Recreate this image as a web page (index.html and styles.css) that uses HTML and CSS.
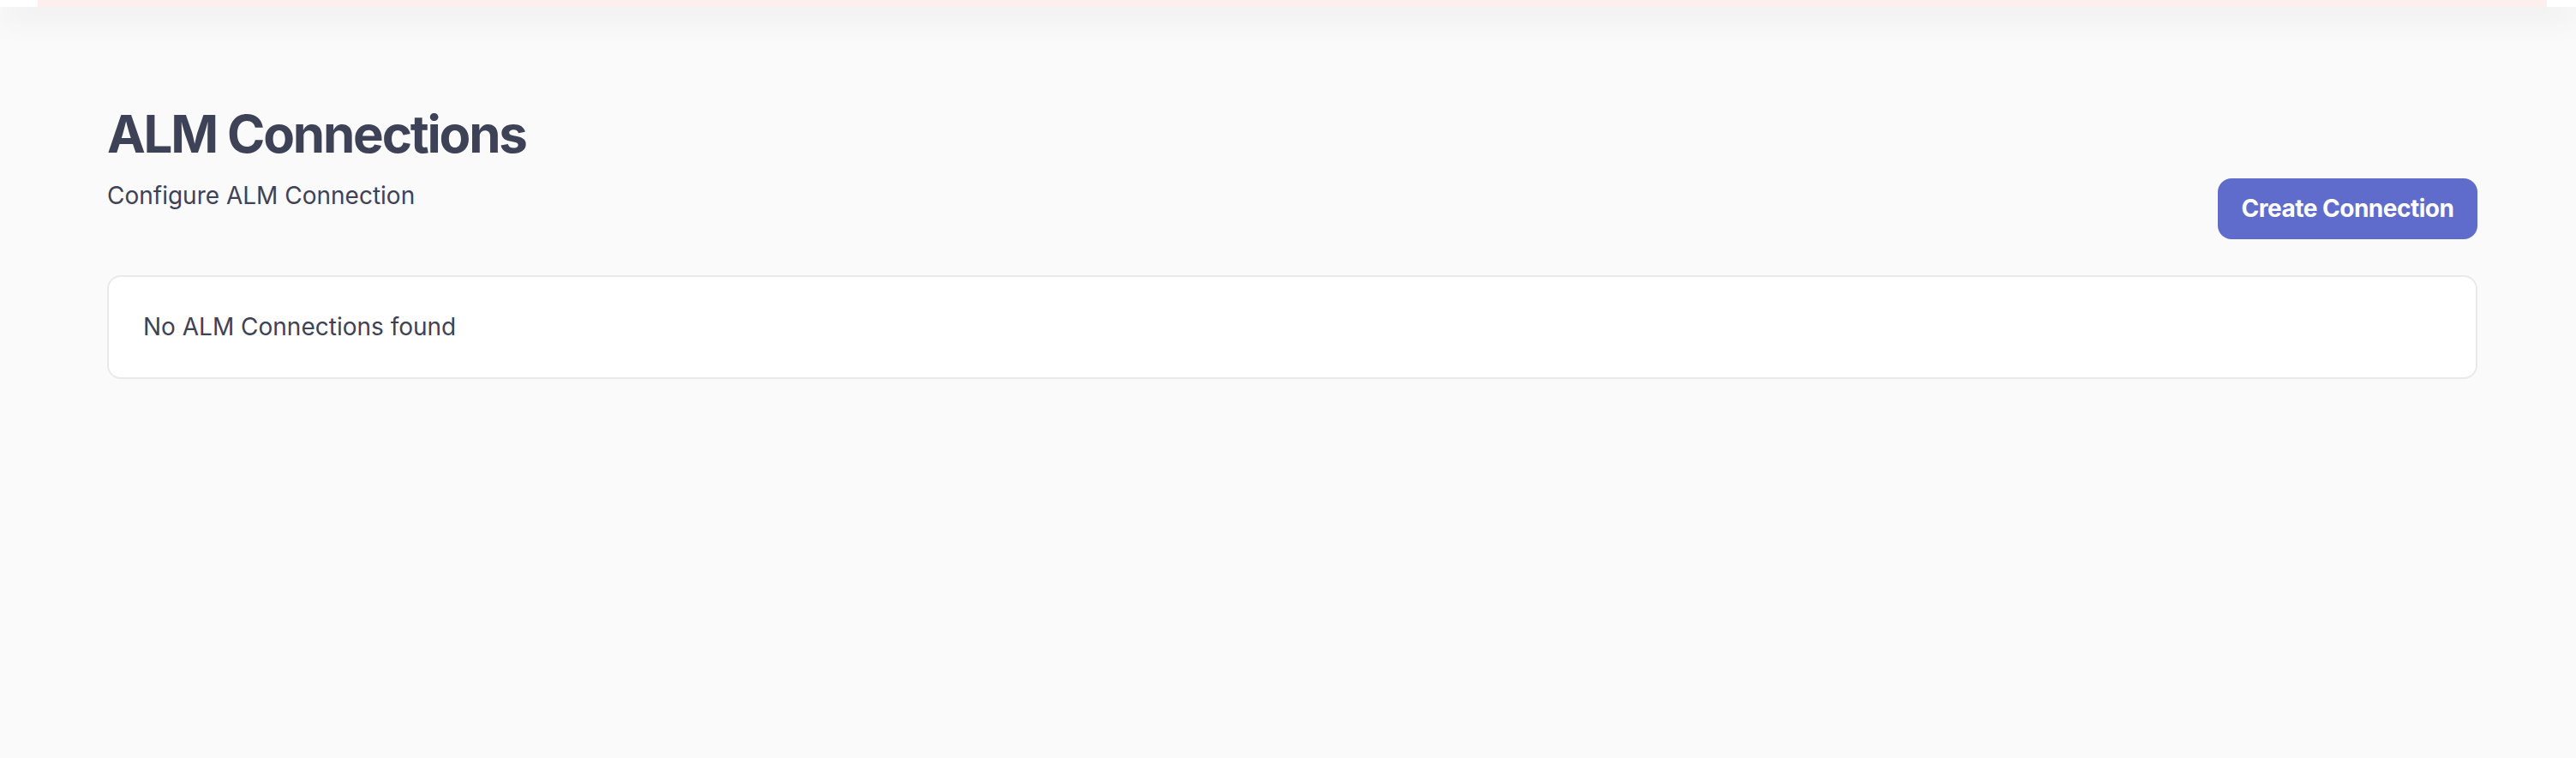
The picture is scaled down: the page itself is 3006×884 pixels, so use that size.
FILE: index.html
```html
<!DOCTYPE html>
<html lang="en">
<head>
<meta charset="utf-8">
<title>ALM Connections</title>
<link rel="stylesheet" href="styles.css">
</head>
<body>
<header class="topbar"><div class="topbar-inner"></div></header>
<main class="page">
  <h1 class="page-title">ALM Connections</h1>
  <div class="page-row">
    <p class="page-subtitle">Configure ALM Connection</p>
    <button class="btn-primary" type="button">Create Connection</button>
  </div>
  <section class="card">
    <p class="card-empty">No ALM Connections found</p>
  </section>
</main>
</body>
</html>
```
FILE: styles.css
```css
* { box-sizing: border-box; }
html, body { margin: 0; padding: 0; }
body {
  background: #fafafa;
  font-family: Inter, "Noto Sans", "Liberation Sans", sans-serif;
  color: #3f4256;
  min-height: 884px;
}
.topbar {
  height: 8px;
  background: #ffffff;
  box-shadow: 0 8px 36px rgba(30, 30, 50, 0.16);
  position: relative;
  z-index: 1;
}
.topbar-inner {
  height: 8px;
  margin: 0 34px 0 44px;
  background: #fcefee;
}
.page {
  padding: 112px 115px 0 125px;
}
.page-title {
  margin: 0;
  font-size: 60px;
  line-height: 72px;
  font-weight: 700;
  letter-spacing: -2.2px;
  color: #3e4256;
}
.page-row {
  margin-top: 16px;
  display: flex;
  justify-content: space-between;
  align-items: flex-start;
}
.page-subtitle {
  margin: 0;
  font-size: 28px;
  line-height: 40px;
  color: #3f4256;
}
.btn-primary {
  background: #606ccb;
  color: #ffffff;
  border: 0;
  border-radius: 16px;
  font-family: inherit;
  font-size: 28px;
  line-height: 40px;
  font-weight: 700;
  letter-spacing: -0.5px;
  white-space: nowrap;
  padding: 15px 0 16px;
  width: 303px;
  text-align: center;
}
.card {
  margin-top: 42px;
  background: #ffffff;
  border: 2px solid #e9e9eb;
  border-radius: 16px;
  padding: 38px 40px 39px;
}
.card-empty {
  margin: 0;
  font-size: 28px;
  line-height: 40px;
  color: #3f4256;
}
```
